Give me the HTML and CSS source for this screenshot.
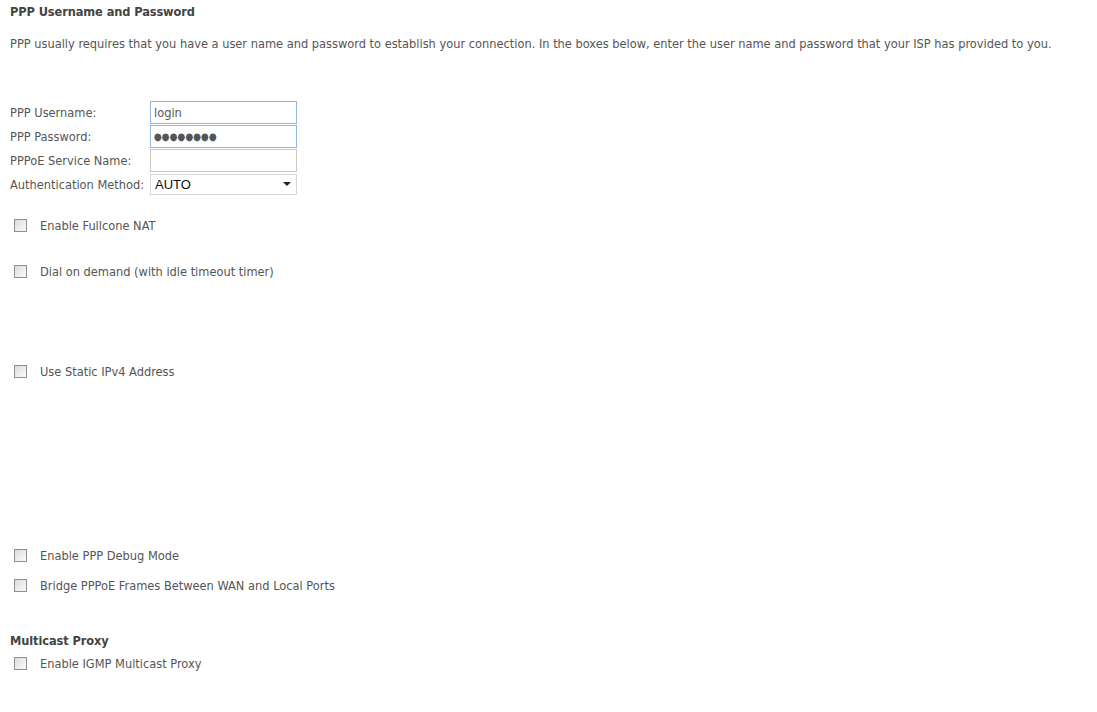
FILE: index.html
```html
<!DOCTYPE html>
<html>
<head>
<meta charset="utf-8">
<link rel="stylesheet" href="styles.css">
</head>
<body>
<div class="page">
  <div class="title">PPP Username and Password</div>
  <p class="desc">PPP usually requires that you have a user name and password to establish your connection. In the boxes below, enter the user name and password that your ISP has provided to you.</p>

  <div class="form">
    <div class="frow"><span class="lbl">PPP Username:</span><span class="inp focus">login</span></div>
    <div class="frow"><span class="lbl">PPP Password:</span><span class="inp focus dots">&#9679;&#9679;&#9679;&#9679;&#9679;&#9679;&#9679;&#9679;</span></div>
    <div class="frow"><span class="lbl">PPPoE Service Name:</span><span class="inp"></span></div>
    <div class="frow"><span class="lbl">Authentication Method:</span><span class="sel"><span class="selv">AUTO</span><span class="arrow"></span></span></div>
  </div>

  <div class="chk c1"><span class="box"></span><span>Enable Fullcone NAT</span></div>
  <div class="chk c2"><span class="box"></span><span>Dial on demand (with idle timeout timer)</span></div>
  <div class="chk c3"><span class="box"></span><span>Use Static IPv4 Address</span></div>
  <div class="chk c4"><span class="box"></span><span>Enable PPP Debug Mode</span></div>
  <div class="chk c5"><span class="box"></span><span>Bridge PPPoE Frames Between WAN and Local Ports</span></div>

  <div class="title t2">Multicast Proxy</div>
  <div class="chk c6"><span class="box"></span><span>Enable IGMP Multicast Proxy</span></div>
</div>
</body>
</html>
```
FILE: styles.css
```css
html, body { margin: 0; padding: 0; background: #fff; }
body { font-family: "DejaVu Sans Condensed", "DejaVu Sans", sans-serif; font-size: 12.7px; color: #555; }
.page { padding: 0 0 0 10px; }
.title { font-weight: bold; color: #444; height: 24px; line-height: 24px; letter-spacing: -0.1px; }
.desc { margin: 8px 0 0 0; height: 24px; line-height: 24px; }
.form { margin-top: 44px; }
.frow { display: flex; align-items: center; height: 24px; }
.lbl { width: 140px; }
.inp { box-sizing: border-box; width: 147px; height: 23px; border: 1px solid #c9c9c9; padding: 0 3px; line-height: 21px; color: #555; }
.inp.focus { border-color: #8fb8de; }
.dots { font-size: 10px; letter-spacing: 0px; color: #555; }
.sel { box-sizing: border-box; width: 147px; height: 21px; border: 1px solid #d6d6d6; display: flex; align-items: center; justify-content: space-between; padding: 0 5px 0 4px; font-family: "Liberation Sans", sans-serif; font-size: 13px; color: #111; }
.arrow { width: 0; height: 0; border-left: 4px solid transparent; border-right: 4px solid transparent; border-top: 4px solid #222; }
.chk { display: flex; align-items: center; height: 20px; }
.box { box-sizing: border-box; width: 13px; height: 13px; border: 1px solid #8f8f8f; background: linear-gradient(135deg, #dcdcdc, #fbfbfb); margin: 0 13px 0 4px; }
.c1 { margin-top: 19px; }
.c2 { margin-top: 26px; }
.c3 { margin-top: 80px; }
.c4 { margin-top: 164px; }
.c5 { margin-top: 10px; }
.t2 { margin-top: 36px; height: 20px; line-height: 20px; }
.c6 { margin-top: 2px; }
```
